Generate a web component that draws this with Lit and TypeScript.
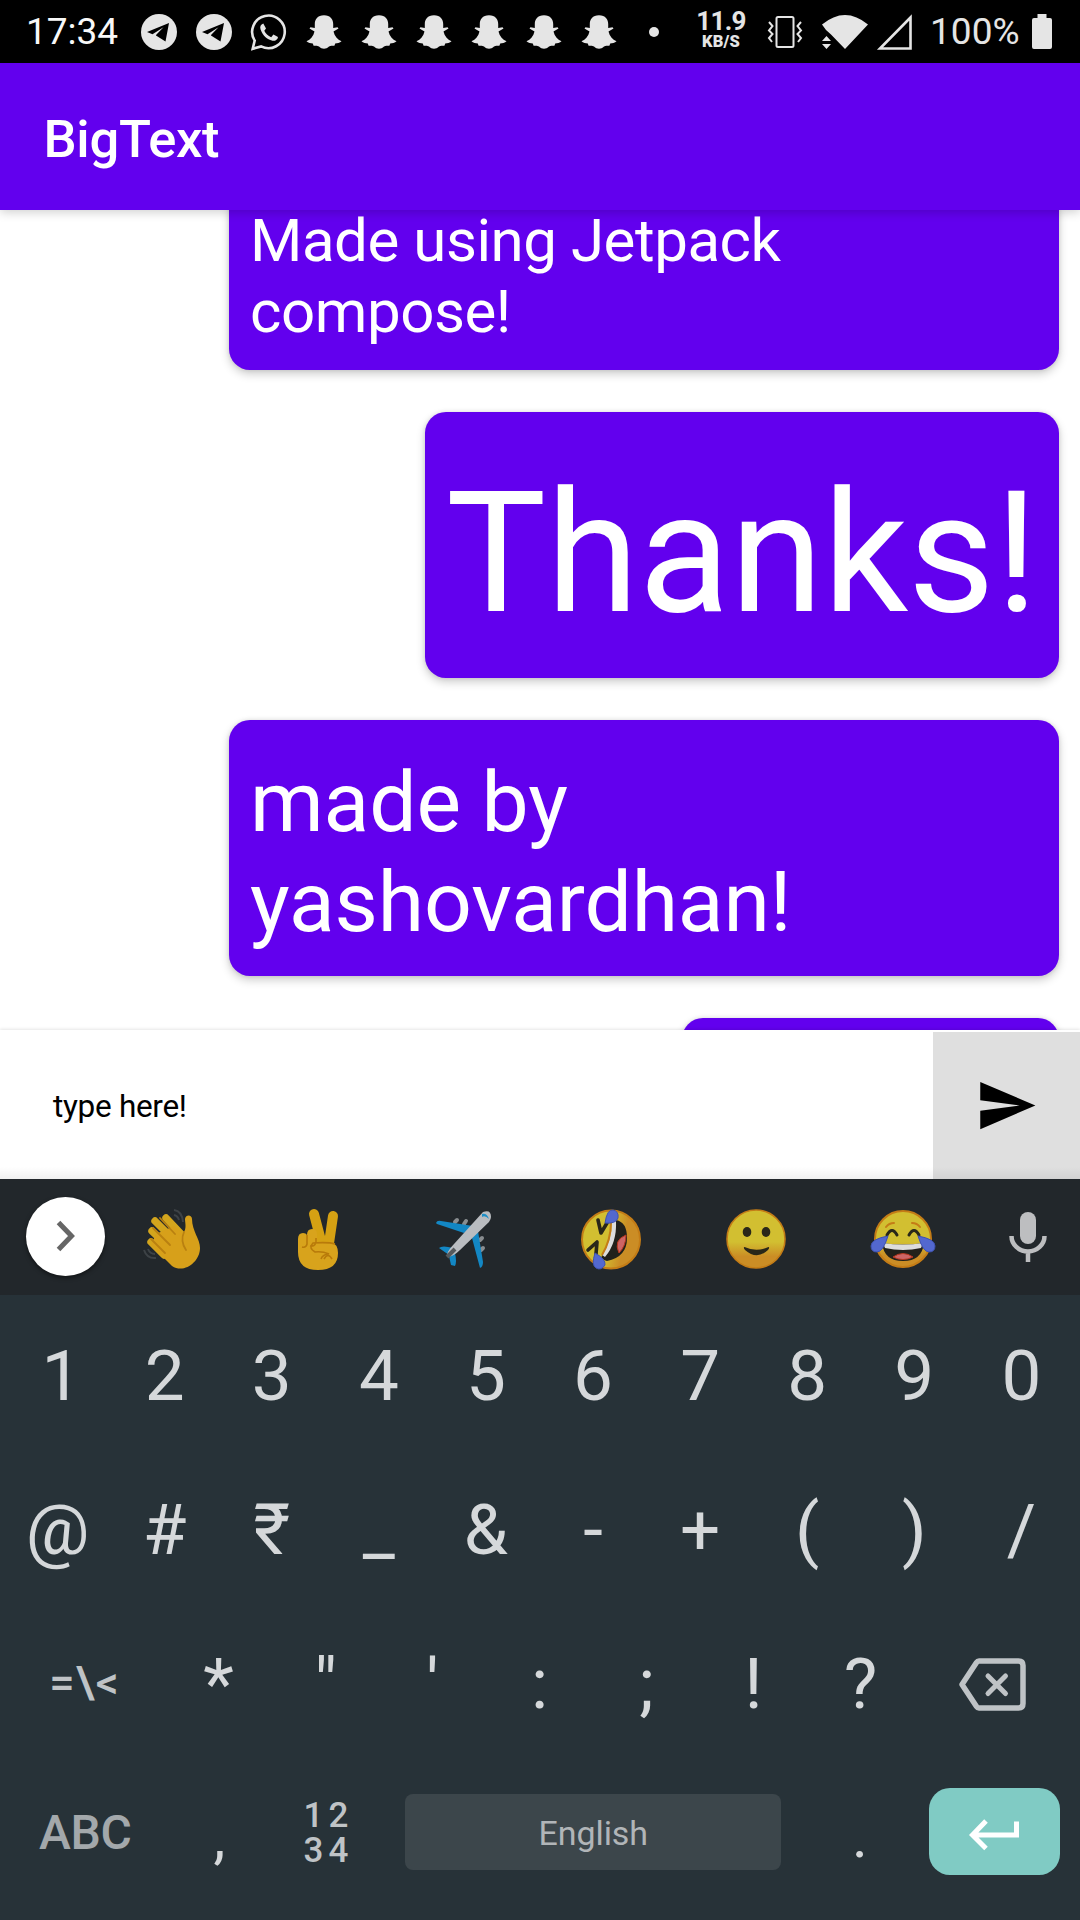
import { LitElement, html, css, svg } from "lit";
import { customElement } from "lit/decorators.js";

const snap = html`<svg class="ic snap" viewBox="0 0 36 36"><path d="M18 1.300C11.500 1.300 8.800 5.500 8.800 10V14L4.500 13.300 3.500 14.500 8.500 17.500C7.500 22 4.500 25.500.5 27.300 2 29.300 5 29 6.800 29.500L7.600 31.700C9.500 31.700 11.500 31.300 13 32.500 16 35.500 20 35.500 23 32.500 24.500 31.300 26.500 31.700 28.400 31.700L29.200 29.500C31 29 34 29.300 35.500 27.300 31.500 25.500 28.500 22 27.500 17.500L32.500 14.500 31.500 13.300 27.200 14V10C27.200 5.500 24.500 1.300 18 1.300Z"/></svg>`;
const telegram = html`<svg class="ic" viewBox="0 0 36 36"><circle cx="18" cy="18" r="18"/><path fill="#000" d="M28 9 6 18l5.500 2.200 11-7L15 21v.5l9.500 6z"/></svg>`;
const whatsapp = html`<svg class="ic" viewBox="0 0 36 36"><path fill="none" stroke="#e5e5e5" stroke-width="2.600" d="M1.700 34.800 3.700 26.600A16.300 16.300 0 1 1 10.100 32.400Z"/><path d="M12.300 9.500c-2.600.8-3.700 3.300-2.700 6 2.300 6.200 6.300 9.800 11.800 11.200 2.600.5 5.300-1 5.600-3.800l-4.600-2.300-2.200 2.600c-3.200-1.100-5.700-3.600-6.900-6.400l1.700-2.400z"/></svg>`;

const wave = svg`
  <g fill="none" stroke="#3d4246" stroke-width="2"><path d="M31 1q8 1 9 12M31 6q4 1 5 5M1 41q3 9 12 8M5 40q2 5 7 5"/></g>
  <g stroke="#d3a51d" stroke-width="7.400" stroke-linecap="round"><path d="m23 9 17 18M12 12l19 19M9 22l18 17M8 33l13 13"/></g>
  <path fill="#d7a01a" d="M13 25 31 17 40 24C44 20 42 14 42 10 43 5 49 6 49 10 49 22 57 30 57 39 57 53 41 65 29 57L8 36Z"/>
  <g fill="none" stroke="#b98010" stroke-width="1.800" stroke-linecap="round"><path d="m17 9 15 16M10 19l17 17M8 30l14 14M41 23q-4 9 2 18"/></g>`;
const victory = svg`
  <g stroke="#d5a113" stroke-width="10" stroke-linecap="round"><path d="m17 6 9 34M36 8l-5 34"/></g>
  <path fill="#d8a31c" d="M1 31q0-6 5-6 3 0 4 2 0-6 5-6 5 0 5 5v8h14q7 2 7 11 0 17-20 17Q1 62 1 44Z"/>
  <path fill="none" stroke="#b87a0a" stroke-width="1.600" d="M10 27v9q-1 4-5 3M19 30q1 9-6 8M38 36q-6-2-22-1-5 5 2 9 7-1 14 2-6 0-8 5M27 51q4-7 8 0"/>`;
const plane = svg`
  <g stroke="#898d90" stroke-width="4" stroke-linecap="round"><path d="m21 10-2 2M30 11l-2 3M46 28l-2 2M47 38l-2 2"/></g>
  <path fill="#1387c4" d="M0 13Q1 10 5 11L37 16 28 23 1 14ZM42 21 47 52Q47 57 44 58L36 28ZM3 38q3-3 14 0l-4 7ZM13 46l6-3q2 9 0 13l-4-1Z"/>
  <path fill="#b9bcc0" d="M47 2Q55-1 55 7 55 9 53 12L24 40Q18 46 12 47 9 43 18 34Z"/><path fill="#1d8fc7" d="M46 4q5-1 7 5-4-4-7-2z"/><path stroke="#55595c" stroke-width="4" d="m11 47 8-8"/>`;
const joy = svg`
  <circle cx="32" cy="29" r="28" fill="url(#face)" stroke="#c47c16" stroke-width="2"/>
  <g fill="none" stroke="#c47c16" stroke-width="2" stroke-linecap="round"><path d="M15 17q3-4 8-4M41 13q5 0 8 4"/></g>
  <g fill="none" stroke="#292719" stroke-width="3" stroke-linecap="round"><path d="M16 25q5-9 10 0M38 25q5-9 10 0"/></g>
  <path fill="#22211b" d="M11 33q21 3 42 0-2 18-21 18T11 33"/><path fill="#ddd" d="M12 33q20 3 40 0l-2 5q-18 4-36 0z"/><path fill="#cd6565" d="M22 47q10-7 20 0-10 5-20 0" stroke="#b9371d"/>
  <g fill="#5368cf" stroke="#3e52b0"><path d="M17 26Q0 29 0 36q0 6 6 6 6 0 11-16M47 26Q64 29 64 36q0 6-6 6-6 0-11-16"/></g>`;
const smile = svg`
  <circle cx="30" cy="30" r="29" fill="url(#face)" stroke="#c47c16" stroke-width="1.600"/><ellipse cx="21" cy="23" rx="4.300" ry="5" fill="#292719"/><ellipse cx="40" cy="23" rx="4.300" ry="5" fill="#292719"/><path d="M18.500 38q12 5.500 24 0 1.500.5-.5 3-11 10.500-23 0-2-2.500-.5-3" fill="#292719"/>`;
const rofl = svg`
  <circle cx="30" cy="30.500" r="29" fill="url(#side)" stroke="#c47c16" stroke-width="2"/>
  <path fill="#22211b" d="M35 11Q46 13 46 29 46 48 26 52 19 50 21 46 35 31 35 11"/><path fill="#ddd" d="M31 12q2-1 4 0 1 22-11 36l-3-2Q31 32 31 12"/><path fill="#cd6565" stroke="#b9371d" d="M45 26q-13 5-7 18 7-7 7-18"/><path d="M30 13q0 18-9 33" fill="none" stroke="#c47c16" stroke-width="2"/>
  <g fill="none" stroke="#292719" stroke-width="3.600" stroke-linecap="round" stroke-linejoin="round"><path d="m17 11 3 13 6-10M7 41l9-8-1 12"/></g>
  <g fill="#5368cf" stroke="#3e52b0"><path d="M24 14Q26 0 32 1q6 1 5 8-2 6-13 5M14 44q-4 12 1 15 5 3 9-3 1-6-10-12"/></g>`;

const emojis = [
  { w: 58, h: 60, g: wave },
  { w: 42, h: 63, g: victory },
  { w: 56, h: 58, g: plane },
  { w: 60, h: 61, g: rofl },
  { w: 61, h: 61, g: smile },
  { w: 65, h: 58, g: joy },
];

@customElement("app-root")
export class AppRoot extends LitElement {
  static styles = css`
    :host { display: block; }
    * { box-sizing: border-box; }
    svg { display: block; flex: none; overflow: visible; }
    .page { width: 1080px; height: 1920px; display: flex; flex-direction: column; overflow: hidden; background: #fff; font-family: Roboto, "Liberation Sans", sans-serif; }
    .status { height: 63px; flex: none; background: #000; color: #e5e5e5; display: flex; align-items: center; position: relative; z-index: 3; font-size: 37px; }
    .status svg { fill: #e5e5e5; }
    .time { width: 113px; padding-left: 26px; color: #f8f8f8; white-space: nowrap; margin-right: 27.500px; }
    .ic { width: 36px; height: 36px; margin-right: 19.070px; }
    .dot { width: 10px; height: 10px; border-radius: 50%; background: #e5e5e5; margin-left: 13px; }
    .speed { width: 80px; margin-left: 22px; text-align: center; font-weight: 700; padding-bottom: 3px; margin-right: 1px; }
    .rate { font-size: 26px; line-height: 23px; display: block; letter-spacing: -0.700px; }
    .unit { font-size: 16.500px; line-height: 17px; display: block; font-weight: 900; letter-spacing: 0.2px; }
    .vib { margin-left: 5px; }
    .wifi { margin-left: 19px; }
    .cell { margin-left: 9px; }
    .pct { width: 90px; margin-left: 17px; white-space: nowrap; }
    .bat { margin-left: 12px; }
    .bar { height: 147px; flex: none; background: #6200ee; color: #fff; display: flex; align-items: center; padding: 4px 0 0 43.500px; font-size: 52.500px; font-weight: 500; letter-spacing: -0.3px; z-index: 2; position: relative; box-shadow: 0 2px 10px rgba(0,0,0,.2); }
    .list { height: 820px; flex: none; overflow: hidden; display: flex; flex-direction: column; align-items: flex-end; justify-content: flex-start; gap: 42px; padding-right: 21px; background: #fff; }
    .bubble { flex: none; background: #6200ee; color: #fff; border-radius: 21px; padding-left: 21px; box-shadow: 0 4px 10px rgba(0,0,0,.2), 0 0 4px rgba(0,0,0,.1); white-space: nowrap; }
    .line { display: block; }
    .b1 { width: 830px; height: 180px; margin-top: -20px; padding-top: 15px; font-size: 60px; line-height: 71px; letter-spacing: -0.45px; }
    .b2 { width: 634px; height: 266px; padding-top: 43px; font-size: 168px; line-height: 197px; }
    .b3 { width: 830px; height: 256px; padding-top: 33px; font-size: 84px; line-height: 100px; letter-spacing: -0.1px; }
    .b4 { width: 377px; height: 100px; }
    .entry { height: 149px; flex: none; display: flex; align-items: flex-end; justify-content: space-between; background: #fff; box-shadow: 0 -1px 3px rgba(0,0,0,.1); position: relative; z-index: 1; }
    .field { flex: 1; height: 147px; display: flex; align-items: center; padding: 2px 0 0 53px; font-size: 31.500px; letter-spacing: -0.3px; color: #000; }
    .send { width: 147px; height: 147px; background: #dfdfdf; display: flex; align-items: center; justify-content: center; }
    .strip { height: 116px; flex: none; background: #22272b; display: flex; align-items: center; position: relative; z-index: 2; }
    .entry::after { content: ""; position: absolute; left: 0; right: 0; bottom: 0; height: 12px; background: linear-gradient(transparent, rgba(0,0,0,.06)); }
    .more { width: 79px; height: 79px; border-radius: 50%; background: #fff; margin: 0 0 2px 26px; display: flex; align-items: center; justify-content: center; box-shadow: 0 2px 4px rgba(0,0,0,.5); flex: none; }
    .emojis { display: grid; grid-template-columns: repeat(6, 146.200px); margin-left: -6px; padding-top: 4px; align-items: center; justify-items: center; width: 877px; flex: none; }
    .mic { margin-left: 32.500px; }
    .keys { height: 625px; flex: none; background: #273238; color: #d5d8da; }
    .row { display: grid; grid-template-columns: repeat(10, 107.100px); padding-left: 4px; height: 154px; font-size: 71px; line-height: 83px; justify-items: center; align-items: start; padding-top: 38.500px; }
    .key { text-align: center; white-space: nowrap; }
    .one { padding-left: 8px; }
    .wide { grid-template-columns: 161px repeat(7, 107px) 156.500px; }
    .last { display: grid; grid-template-columns: 161.500px 107px 107px 426.500px 107px 146.500px; height: 163px; padding: 31px 0 0 4.500px; align-items: start; justify-items: center; }
    .fn { color: #bfc3c6; }
    .alt { font-size: 45px; font-weight: 500; letter-spacing: 1.200px; margin-top: -1px; }
    .abc { font-size: 48px; line-height: 56px; font-weight: 500; color: #a3a8ab; padding-top: 17px; letter-spacing: -0.4px; }
    .punct { font-size: 60px; line-height: 70px; padding-top: 14px; }
    .nums { font-size: 35px; line-height: 35px; font-weight: 500; color: #bfc3c6; letter-spacing: 5px; padding: 10px 0 0 4px; }
    .space { width: 376px; height: 76px; margin-top: 6px; border-radius: 8px; background: #3c464b; color: #b1b5b8; font-size: 34px; letter-spacing: -0.1px; padding-top: 1px; display: flex; align-items: center; justify-content: center; }
    .enter { width: 131px; height: 87px; border-radius: 21px; background: #80cbc4; display: flex; align-items: center; justify-content: center; justify-self: end; padding: 5px 2px 0 0; }
    .bk { margin-top: 16px; }
  `;

  render() {
    return html`<div class="page">
      <div class="status">
        <span class="time">17:34</span>
        ${telegram}${telegram}${whatsapp}${[0, 1, 2, 3, 4, 5].map(() => snap)}
        <span class="dot"></span>
        <span class="speed"><span class="rate">11.9</span><span class="unit">KB/S</span></span>
        <svg class="vib" width="36" height="32" viewBox="0 0 36 32"><g fill="none" stroke="#e5e5e5" stroke-width="2"><rect x="9.500" y="1" width="17" height="30" rx="1.500"/><path d="M2 6l3.500 4L2 14.500 5.500 18 2 22l3 4M34 6l-3.500 4 3.500 4.500-3.500 3.500 3.500 4-3 4"/></g></svg>
        <svg class="wifi" width="46" height="34" viewBox="0 0 46 34"><path d="M0 9.500Q23-9.500 46 9.500L23 34 9 19.500 4 15ZM0 26l4.500-5L9 26ZM0 29h9l-4.500 5z"/></svg>
        <svg class="cell" width="36" height="36" viewBox="0 0 36 36"><path d="M3 34.500H33.500V3.500Z" fill="none" stroke="#e5e5e5" stroke-width="2.600"/></svg>
        <span class="pct">100%</span>
        <svg class="bat" width="20" height="35" viewBox="0 0 20 35"><path d="M5.500 0h9v4H18q2 0 2 2v27q0 2-2 2H2q-2 0-2-2V6q0-2 2-2h3.500z"/></svg>
      </div>
      <div class="bar">BigText</div>
      <div class="list">
        <div class="bubble b1"><span class="line">Made using Jetpack</span><span class="line">compose!</span></div>
        <div class="bubble b2">Thanks!</div>
        <div class="bubble b3"><span class="line">made by</span><span class="line">yashovardhan!</span></div>
        <div class="bubble b4"></div>
      </div>
      <div class="entry"><div class="field">type here!</div>
        <div class="send"><svg width="63" height="63" viewBox="0 0 24 24"><path d="M2.010 21 23 12 2.010 3 2 10l15 2-15 2z"/></svg></div></div>
      <div class="strip">
        <svg width="0" height="0"><defs>
          <linearGradient id="face" x1="0" y1="0" x2="0" y2="1"><stop offset=".55" stop-color="#d2bf31"/><stop offset=".8" stop-color="#cb8d25"/></linearGradient>
          <linearGradient id="side" x1="0" y1="0" x2="1" y2=".2"><stop offset=".5" stop-color="#d2bf31"/><stop offset=".8" stop-color="#cb8d25"/></linearGradient></defs></svg>
        <div class="more"><svg width="20" height="32" viewBox="0 0 20 32"><path d="m2.500 2.500 13 13.500-13 13.500" fill="none" stroke="#666" stroke-width="5"/></svg></div>
        <div class="emojis">${emojis.map((e) => html`<svg width=${e.w} height=${e.h} viewBox="0 0 ${e.w} ${e.h}">${e.g}</svg>`)}</div>
        <svg class="mic" width="38" height="50" viewBox="0 0 38 50"><rect x="11" width="16" height="32" rx="8" fill="#bdbec0"/><path d="M2.500 24a16.500 15.500 0 0 0 33 0M19 40v10" fill="none" stroke="#bdbec0" stroke-width="4.500"/></svg>
      </div>
      <div class="keys">
        <div class="row">${[..."1234567890"].map((k) => html`<span class="key ${k === "1" ? "one" : ""}">${k}</span>`)}</div>
        <div class="row">${[..."@#₹_&-+()/"].map((k) => html`<span class="key">${k}</span>`)}</div>
        <div class="row wide"><span class="key fn alt">=\\&lt;</span>${[..."*\"':;!?"].map((k) => html`<span class="key">${k}</span>`)}
          <svg class="bk" width="67" height="53" viewBox="0 0 67 53"><g fill="none" stroke="#bfc3c6" stroke-width="5.500" stroke-linejoin="round" stroke-linecap="round"><path d="M20 3H59.500q4.500 0 4.500 4.500V45.500q0 4.500-4.500 4.500H20q-1.500 0-2.500-1.500L3 26.500 17.500 4.500q1-1.500 2.500-1.500Z"/><path stroke-width="5" d="m29 18 17.500 17.500m0-17.500-17.500 17.500"/></g></svg></div>
        <div class="last"><span class="key abc">ABC</span><span class="key punct">,</span><span class="key nums">12<br>34</span><div class="space">English</div><span class="key punct">.</span>
          <div class="enter"><svg width="50" height="31" viewBox="0 0 50 31"><path d="M47.500 2.500v13.500H4M17 2 3.500 16 17 29.500" fill="none" stroke="#fff" stroke-width="5"/></svg></div></div>
      </div>
    </div>`;
  }
}
